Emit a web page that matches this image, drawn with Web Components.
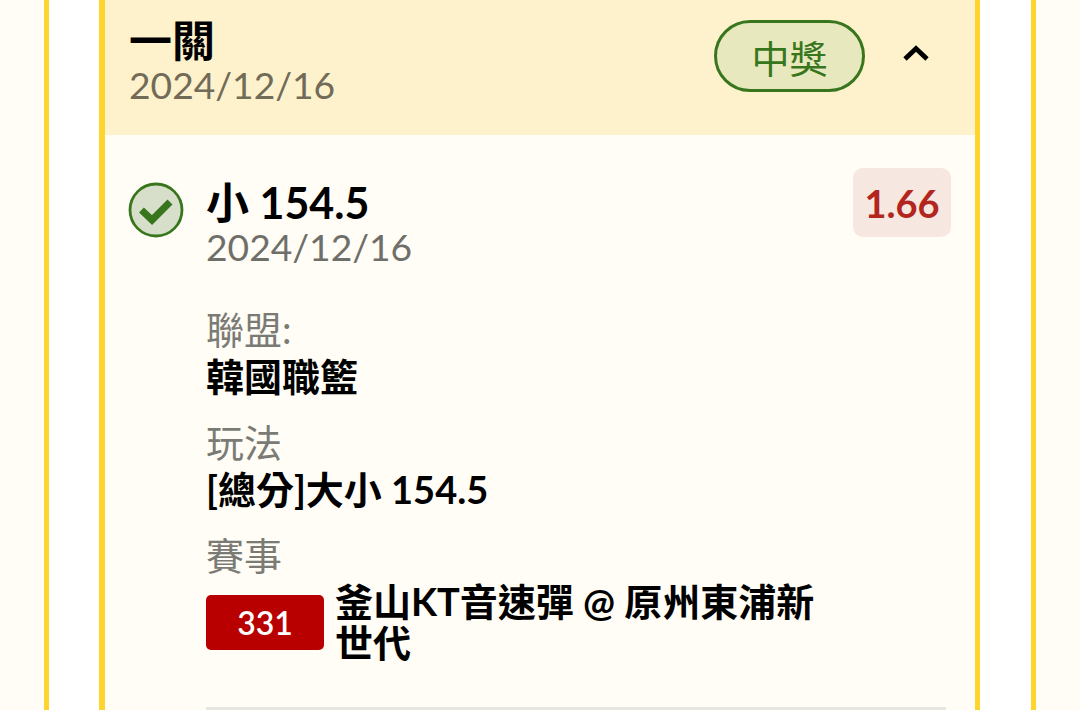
<!DOCTYPE html>
<html lang="zh-Hant"><head><meta charset="utf-8"><style>
html,body{margin:0;padding:0;height:710px;overflow:hidden;background:#fffdf5}
body{font-family:Lato,"Noto Sans CJK TC",sans-serif;color:#000}
</style></head><body>
<bet-shell>
  <bet-card>
    <bet-header slot="header" title-text="一關" date="2024/12/16" status="中獎"></bet-header>
    <bet-leg selection="小 154.5" date="2024/12/16" odds="1.66">
      <info-row label="聯盟:">韓國職籃</info-row>
      <info-row label="玩法">[總分]大小 154.5</info-row>
      <match-row code="331" label="賽事">釜山KT音速彈 @ 原州東浦新世代</match-row>
    </bet-leg>
  </bet-card>
</bet-shell>
<script>
function def(name,html,setup){
  customElements.define(name,class extends HTMLElement{
    constructor(){super();this.attachShadow({mode:'open'}).innerHTML=html;}
    connectedCallback(){if(setup)setup(this,this.shadowRoot);}
  });
}
def('bet-shell',`<style>
:host{display:block;height:710px;padding:0 44px;box-sizing:border-box}
.frame{height:100%;box-sizing:border-box;border-left:5px solid #fed42f;border-right:5px solid #fed42f;background:#fff;padding:0 51px 0 50px}
</style><div class="frame"><slot></slot></div>`);
def('bet-card',`<style>
:host{display:block;height:100%;box-sizing:border-box;border-left:6px solid #fed42f;border-right:5px solid #fed42f;background:#fffdf5;overflow:hidden}
</style><slot name="header"></slot><slot></slot>`);
def('bet-header',`<style>
:host{display:flex;align-items:flex-start;justify-content:space-between;height:135px;box-sizing:border-box;background:#fdf2cb;padding:19px 8px 0 24px}
.t{font-size:43px;font-weight:700;line-height:44px;}
.d{font-size:37.2px;line-height:44px;color:#716b58}
.r{display:flex;align-items:center;margin-top:1px}
.pill{width:151px;height:72px;box-sizing:border-box;border:3px solid #38761d;border-radius:36px;background:#e7e8bd;color:#38761d;font-size:38px;display:flex;align-items:center;justify-content:center}
.chev{width:102px;height:72px;display:flex;align-items:center;justify-content:center}
.chev svg{margin-bottom:6px}
</style><div><div class="t"></div><div class="d"></div></div>
<div class="r"><div class="pill"></div><div class="chev"><svg width="30" height="20" viewBox="0 0 30 20"><path d="M4 16 L15 5.5 L26 16" fill="none" stroke="#000" stroke-width="4.8"/></svg></div></div>`,
(h,s)=>{s.querySelector('.t').textContent=h.getAttribute('title-text');s.querySelector('.d').textContent=h.getAttribute('date');s.querySelector('.pill').textContent=h.getAttribute('status');});
def('bet-leg',`<style>
:host{display:block;padding:33px 24px 0 23px}
.top{display:grid;grid-template-columns:56px 1fr auto;column-gap:22px;align-items:start}
.ic{margin-top:14px;display:block}
.s{font-size:43px;font-weight:700;line-height:46px;margin-top:12px}
.d{font-size:37.2px;line-height:44px;color:#6f6f6a;margin-top:-1px}
.odds{width:98px;height:69px;border-radius:10px;background:#f6e7e0;color:#b3261e;font-size:38px;font-weight:700;display:flex;align-items:center;justify-content:center}
.body{margin-left:78px;padding-top:37px}
</style>
<div class="top">
<svg class="ic" width="56" height="56" viewBox="0 0 56 56"><circle cx="28" cy="28" r="26" fill="#d7dfcb" stroke="#38761d" stroke-width="2.8"/><path d="M13.5 28 L24 38 L42 20" fill="none" stroke="#38761d" stroke-width="7"/></svg>
<div><div class="s"></div><div class="d"></div></div>
<div class="odds"></div></div>
<div class="body"><slot></slot></div>`,
(h,s)=>{s.querySelector('.s').textContent=h.getAttribute('selection');s.querySelector('.d').textContent=h.getAttribute('date');s.querySelector('.odds').textContent=h.getAttribute('odds');});
def('info-row',`<style>
:host{display:block;margin-bottom:20px}
.l{font-size:38px;line-height:46px;color:#7b7b76}
.v{font-size:38px;line-height:46px;font-weight:700;margin-top:1px}
</style><div class="l"></div><div class="v"><slot></slot></div>`,
(h,s)=>{s.querySelector('.l').textContent=h.getAttribute('label');});
def('match-row',`<style>
:host{display:block;margin-top:1px}
.l{font-size:38px;line-height:46px;color:#7b7b76}
.m{display:flex;align-items:center;gap:11px;margin-top:3px;padding-bottom:44px;border-bottom:4px solid #e8e6e0;margin-right:5px}
.c{flex:none;width:118px;height:55px;border-radius:5px;background:#b90000;color:#fff;font-size:32px;font-weight:600;display:flex;align-items:center;justify-content:center}
.v{width:490px;font-size:38px;line-height:41px;font-weight:700}
</style><div class="l"></div><div class="m"><div class="c"></div><div class="v"><slot></slot></div></div>`,
(h,s)=>{s.querySelector('.l').textContent=h.getAttribute('label');s.querySelector('.c').textContent=h.getAttribute('code');});
</script></body></html>
